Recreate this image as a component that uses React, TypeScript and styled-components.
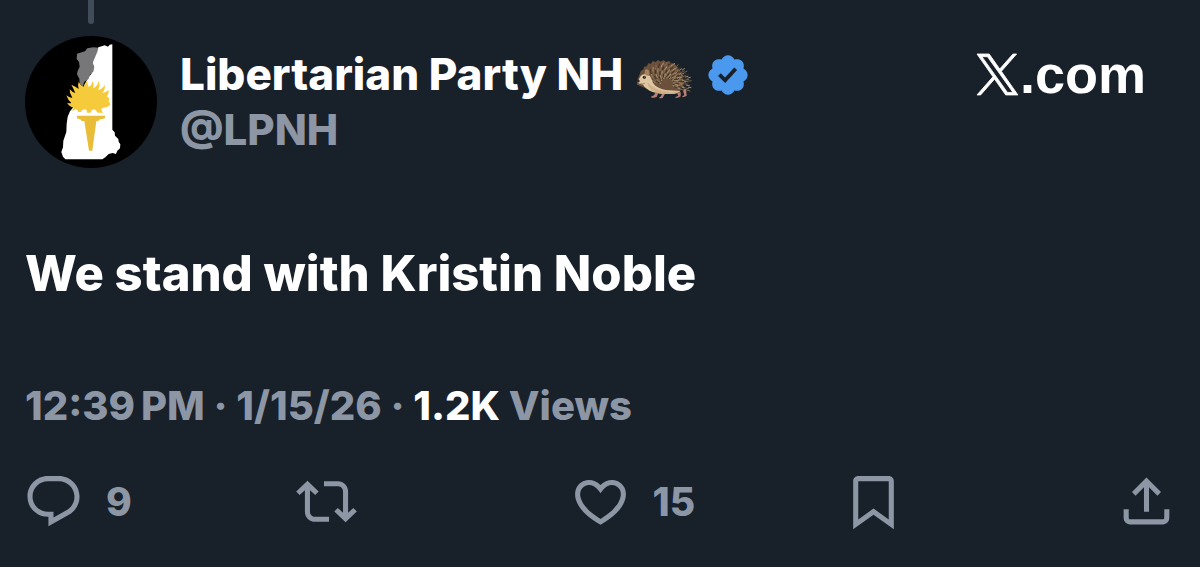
import React from "react";
import styled, { createGlobalStyle } from "styled-components";

const color = {
  page: "#18202a",
  text: "#ffffff",
  muted: "#8c96a4",
  thread: "#414c5b",
  verified: "#4a99ee",
};

const GlobalStyle = createGlobalStyle`
  *, *::before, *::after { box-sizing: border-box; }
  body {
    margin: 0;
    background: ${color.page};
    color: ${color.text};
    font-family: Inter, "Liberation Sans", sans-serif;
    font-weight: 800;
  }
`;

const Post = styled.article`
  display: flex;
  flex-direction: column;
`;

const Header = styled.header`
  display: flex;
  align-items: flex-start;
  gap: 23px;
  padding: 0 54px 0 25px;
`;

const AvatarColumn = styled.div`
  display: flex;
  flex-direction: column;
  align-items: center;
  gap: 12px;
  flex: none;
`;

const ThreadLine = styled.span`
  width: 6px;
  height: 24px;
  border-radius: 0 0 3px 3px;
  background: ${color.thread};
`;

const Avatar = styled.svg`
  display: block;
  width: 132px;
  height: 132px;
`;

const Author = styled.div`
  flex: 1;
  min-width: 0;
  padding-top: 47px;
`;

const NameRow = styled.h1`
  display: flex;
  align-items: center;
  margin: 0;
  font-size: 44px;
  font-weight: inherit;
  line-height: 55px;
  white-space: nowrap;
`;

const ProfileLink = styled.a`
  color: inherit;
  text-decoration: none;
`;

const Hedgehog = styled.svg`
  width: 56px;
  height: 40px;
  margin: 8px 12px 0 14px;
`;

const Verified = styled.svg`
  width: 46px;
  height: 46px;
`;

const Handle = styled.div`
  font-size: 42px;
  line-height: 55px;
  color: ${color.muted};
`;

const Brand = styled.a`
  display: flex;
  align-items: center;
  gap: 2px;
  padding-top: 46px;
  color: inherit;
  text-decoration: none;
  font-family: "Liberation Sans", Arial, sans-serif;
  font-size: 54px;
  line-height: 56px;
`;

const BrandMark = styled.svg`
  width: 41px;
  height: 41px;
  overflow: visible;
`;

const Body = styled.p`
  margin: 78px 0 0;
  padding: 0 25px;
  font-size: 49px;
  line-height: 55px;
`;

const Meta = styled.p`
  margin: 77px 0 0;
  padding: 0 25px;
  font-size: 40px;
  line-height: 55px;
  color: ${color.muted};
`;

const ViewCount = styled.strong`
  color: ${color.text};
  font-weight: inherit;
`;

const Actions = styled.div`
  display: grid;
  grid-template-columns: repeat(4, 1fr) auto;
  justify-items: start;
  padding: 38px 23px 35px 23px;
`;

const ActionButton = styled.button`
  display: flex;
  align-items: center;
  gap: 22px;
  padding: 0;
  border: 0;
  background: none;
  color: ${color.muted};
  font: inherit;
  font-size: 39px;
  line-height: 61px;
  cursor: pointer;
`;

const ActionIcon = styled.svg`
  display: block;
  width: 61px;
  height: 61px;
  fill: currentColor;
`;

const actions = [
  {
    label: "Reply",
    count: "9",
    path: "M1.751 10c0-4.42 3.584-8 8.005-8h4.366c4.49 0 8.129 3.64 8.129 8.13 0 2.96-1.607 5.68-4.196 7.11l-8.054 4.46v-3.69h-.067c-4.49.1-8.183-3.51-8.183-8.01zm8.005-6c-3.317 0-6.005 2.69-6.005 6 0 3.37 2.77 6.08 6.138 6.01l.351-.01h1.761v2.3l5.087-2.81c1.951-1.08 3.163-3.13 3.163-5.36 0-3.39-2.744-6.13-6.129-6.13H9.756z",
  },
  {
    label: "Repost",
    path: "M4.5 3.88l4.432 4.14-1.364 1.46L5.5 7.55V16c0 1.1.896 2 2 2H13v2H7.5c-2.209 0-4-1.79-4-4V7.55L1.432 9.48.068 8.02 4.5 3.88zM16.5 6H11V4h5.5c2.209 0 4 1.79 4 4v8.45l2.068-1.93 1.364 1.46-4.432 4.14-4.432-4.14 1.364-1.46 2.068 1.93V8c0-1.1-.896-2-2-2z",
  },
  {
    label: "Like",
    count: "15",
    path: "M16.697 5.5c-1.222-.06-2.679.51-3.89 2.16l-.805 1.09-.806-1.09C9.984 6.01 8.526 5.44 7.304 5.5c-1.243.07-2.349.78-2.91 1.91-.552 1.12-.633 2.78.479 4.82 1.074 1.97 3.257 4.27 7.129 6.61 3.87-2.34 6.052-4.64 7.126-6.61 1.111-2.04 1.03-3.7.477-4.82-.561-1.13-1.666-1.84-2.908-1.91zm4.187 7.69c-1.351 2.48-4.001 5.12-8.379 7.67l-.503.3-.504-.3c-4.379-2.55-7.029-5.19-8.382-7.67-1.36-2.5-1.41-4.86-.514-6.67.887-1.79 2.647-2.91 4.601-3.01 1.651-.09 3.368.56 4.798 2.01 1.429-1.45 3.146-2.1 4.796-2.01 1.954.1 3.714 1.22 4.601 3.01.896 1.81.846 4.17-.514 6.67z",
  },
  {
    label: "Bookmark",
    path: "M4 4c0-1.1.9-2 2-2h12c1.1 0 2 .9 2 2v18.94l-8-5.71-8 5.71V4zM6 4v15.06l6-4.29 6 4.29V4H6z",
  },
  {
    label: "Share",
    path: "M12 2.59l5.7 5.7-1.41 1.42L13 6.41V16h-2V6.41l-3.3 3.3-1.41-1.42L12 2.59zM21 15l-.02 3.51c0 1.38-1.12 2.49-2.5 2.49H5.5C4.11 21 3 19.88 3 18.5V15h2v3.5c0 .28.22.5.5.5h12.98c.28 0 .5-.22.5-.5L19 15h2z",
  },
];

/* Short strokes fanned over the hedgehog's back, in rows that follow its curve. */
const quills = Array.from({ length: 9 }, (_, row) =>
  Array.from({ length: 22 }, (_, i) => {
    const angle = Math.PI * (1.02 + i * 0.052 + (row % 2) * 0.024);
    const reach = 0.28 + row * 0.085;
    const x = 90 + Math.cos(angle) * 68 * reach;
    const y = 74 + Math.sin(angle) * 60 * reach;
    return {
      d: `M${x.toFixed(1)} ${y.toFixed(1)}l${(Math.cos(angle) * 5 + 3).toFixed(1)} ${(Math.sin(angle) * 6).toFixed(1)}`,
      tone: ["#b09a7c", "#3d2b20", "#87704f"][(i * 2 + row) % 3],
    };
  })
).flat();

function HedgehogEmoji() {
  return (
    <Hedgehog viewBox="0 0 168 120" role="img" aria-label="hedgehog">
      <path
        d="M12 35l8-4 1-8 9-1 3-9 9 1 5-8 9 3 7-6 8 5 9-5 7 6 10-3 5 7 10 0 3 8 9 3 1 8 8 5-1 9 7 7-3 8 5 8-4 7 3 8-7 5-5 9-15 4-72-8-45-18z"
        fill="#6b513b"
      />
      {quills.map((q, i) => (
        <path key={i} d={q.d} stroke={q.tone} strokeWidth="2.6" strokeLinecap="round" />
      ))}
      <path
        d="M11 51q8-8 20-5c11 4 12 15 17 25 7 13 25 20 47 23l35 2q-8 9-27 9-35 2-58-7-18-7-27-21-13-2-17-8-1-5 4-7z"
        fill="#dfc7a1"
      />
      <path d="M31 70q22 25 68 29l31-3q-12 10-36 9-32 0-52-12-10-10-11-23z" fill="#d0b189" />
      <path
        d="M55 99l-3 9-11 6q2 3 9 2l9-2 5-13zM75 104l-3 8-6 4q3 3 11 1l7-13zM120 101l4 9-10 5q3 3 12 0l5-3v-13zM138 95l4 13-7 5q4 3 11-1l3-2-2-20z"
        fill="#bc8071"
      />
      <path d="M24 33q8-6 12 2t-1 16q-8 0-12-6z" fill="#a68461" />
      <circle cx="22" cy="55" r="4.5" fill="#211713" />
      <circle cx="23" cy="54" r="1.2" fill="#ffffff" />
      <ellipse cx="4" cy="66" rx="4" ry="4.5" fill="#33231e" />
      <path d="M10 74q7 3 13-1" fill="none" stroke="#87543e" strokeWidth="2" />
    </Hedgehog>
  );
}

function AvatarPicture() {
  return (
    <Avatar viewBox="45 105 396 396" role="img" aria-label="Libertarian Party NH">
      <circle cx="243" cy="303" r="198" fill="#000000" />
      <path
        d="M265 139l10-3 9-3 10 4 5-6 8-1V386l7 8 1 10 10 10 1 8 5 8-1 12-8 7-4 10-10-3-12 3-10 10-9 6H166l-7-8-5-14 5-14 1-20 9-26 1-25 3-21 7-16 10-12 45-90 9-10 2-14-2-11 4-12 6-22z"
        fill="#ffffff"
      />
      <path
        d="M201 158l24-7 7-9 18-3 15 1-3 12-9 22-5 11 5 12-3 15-9 8-6 15-12 7-5 16-9-11-1-14-7-13 2-10 6-13-2-14-7-9z"
        fill="#77777a"
      />
      <path
        d="M183 328Q190 325 192 320Q180 319 171 305Q180 308 184 306Q174 298 169 283Q180 292 187 290Q178 278 179 265Q188 275 196 276Q190 262 184 251Q197 256 206 264Q202 252 206 243Q212 254 221 258Q224 248 232 238Q231 250 236 257Q246 254 247 240Q254 252 249 262Q262 257 266 240Q272 254 264 267Q278 264 284 251Q287 264 277 275Q288 275 296 267Q297 280 290 286Q297 288 298 294L296 301Q302 306 300 312Q297 318 287 319Q280 320 274 324Q274 330 280 335H263Q257 325 251 325Q244 326 242 335H231Q232 327 226 325Q216 324 213 333H205Q203 326 197 324Q191 330 183 328Z"
        fill="#f5cb3c"
      />
      <path d="M201 344h84v8l-18 4-1 4h-7l-12 89h-10l-14-89h-9l-1-4-12-4z" fill="#e9bd38" />
    </Avatar>
  );
}

export default function App() {
  return (
    <>
      <GlobalStyle />
      <Post>
        <Header>
          <AvatarColumn>
            <ThreadLine />
            <AvatarPicture />
          </AvatarColumn>
          <Author>
            <NameRow>
              <ProfileLink href="#profile">Libertarian Party NH</ProfileLink>
              <HedgehogEmoji />
              <Verified viewBox="0 0 24 24" fill={color.verified} role="img" aria-label="Verified account">
                <path d="M22.25 12c0-1.43-.88-2.67-2.19-3.34.46-1.39.2-2.9-.81-3.91s-2.52-1.27-3.91-.81c-.66-1.31-1.91-2.19-3.34-2.19s-2.67.88-3.33 2.19c-1.4-.46-2.91-.2-3.92.81s-1.26 2.52-.8 3.91c-1.31.67-2.2 1.91-2.2 3.34s.89 2.67 2.2 3.34c-.46 1.39-.21 2.9.8 3.91s2.52 1.26 3.91.81c.67 1.31 1.91 2.19 3.34 2.19s2.68-.88 3.34-2.19c1.39.45 2.9.2 3.91-.81s1.27-2.52.81-3.91c1.31-.67 2.19-1.91 2.19-3.34zm-11.71 4.2L6.8 12.46l1.41-1.42 2.26 2.26 4.8-5.23 1.47 1.36-6.2 6.77z" />
              </Verified>
            </NameRow>
            <Handle>
              <ProfileLink href="#profile">@LPNH</ProfileLink>
            </Handle>
          </Author>
          <Brand href="#home">
            <BrandMark
              viewBox="0 0 24 24"
              fill="currentColor"
              stroke="currentColor"
              strokeWidth="0.5"
              role="img"
              aria-label="X"
            >
              <path d="M14.258 10.152L23.176 0h-2.113l-7.747 8.813L7.133 0H0l9.352 13.328L0 23.973h2.113l8.176-9.309 6.531 9.309h7.133zm-2.895 3.293l-.949-1.328L2.875 1.56h3.246l6.086 8.523.945 1.328 7.91 11.078h-3.246z" />
            </BrandMark>
            .com
          </Brand>
        </Header>
        <Body>We stand with Kristin Noble</Body>
        <Meta>
          <time dateTime="2026-01-15T12:39">12:39{"\u2009"}PM · 1/15/26</time> · <ViewCount>1.2K</ViewCount> Views
        </Meta>
        <Actions>
          {actions.map(({ label, count, path }) => (
            <ActionButton key={label} type="button" aria-label={count ? `${label}, ${count}` : label}>
              <ActionIcon viewBox="0 0 24 24" aria-hidden="true">
                <path d={path} />
              </ActionIcon>
              {count}
            </ActionButton>
          ))}
        </Actions>
      </Post>
    </>
  );
}
